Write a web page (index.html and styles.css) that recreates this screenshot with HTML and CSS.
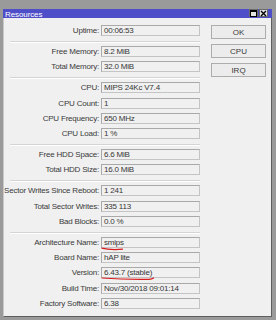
FILE: index.html
```html
<!DOCTYPE html>
<html lang="en">
<head>
    <meta charset="UTF-8">
    <meta name="viewport" content="width=device-width, initial-scale=1.0">
    <title>Resources</title>
    <link rel="stylesheet" href="styles.css">
</head>
<body>
    <div class="window">
        <div class="titlebar">
            <span class="title">Resources</span>
            <div class="title-buttons">
                <span class="title-btn">
                    <svg width="7" height="7" viewBox="0 0 7 7"><rect x="0.5" y="0.5" width="6" height="6" fill="none" stroke="#000"/><line x1="0" y1="1.5" x2="7" y2="1.5" stroke="#000"/></svg>
                </span>
                <span class="title-btn">
                    <svg width="7" height="7" viewBox="0 0 7 7"><path d="M1 1 L6 6 M6 1 L1 6" stroke="#000" stroke-width="1.4"/></svg>
                </span>
            </div>
        </div>

        <div class="content">
            <div class="info">
                <div class="group">
                    <div class="row"><span class="label">Uptime:</span><span class="field">00:06:53</span></div>
                </div>
                <div class="group">
                    <div class="row"><span class="label">Free Memory:</span><span class="field">8.2 MiB</span></div>
                    <div class="row"><span class="label">Total Memory:</span><span class="field">32.0 MiB</span></div>
                </div>
                <div class="group">
                    <div class="row"><span class="label">CPU:</span><span class="field">MIPS 24Kc V7.4</span></div>
                    <div class="row"><span class="label">CPU Count:</span><span class="field">1</span></div>
                    <div class="row"><span class="label">CPU Frequency:</span><span class="field">650 MHz</span></div>
                    <div class="row"><span class="label">CPU Load:</span><span class="field">1 %</span></div>
                </div>
                <div class="group">
                    <div class="row"><span class="label">Free HDD Space:</span><span class="field">6.6 MiB</span></div>
                    <div class="row"><span class="label">Total HDD Size:</span><span class="field">16.0 MiB</span></div>
                </div>
                <div class="group">
                    <div class="row"><span class="label">Sector Writes Since Reboot:</span><span class="field">1 241</span></div>
                    <div class="row"><span class="label">Total Sector Writes:</span><span class="field">335 113</span></div>
                    <div class="row"><span class="label">Bad Blocks:</span><span class="field">0.0 %</span></div>
                </div>
                <div class="group last">
                    <div class="row"><span class="label">Architecture Name:</span><span class="field">smips
                        <svg class="mark mark-arch" width="24" height="4" viewBox="0 0 24 4"><path d="M0.5 1.2 Q 9 3.2 22 2.2" fill="none" stroke="#d81e1e" stroke-width="1.2"/></svg>
                    </span></div>
                    <div class="row"><span class="label">Board Name:</span><span class="field">hAP lite</span></div>
                    <div class="row"><span class="label">Version:</span><span class="field">6.43.7 (stable)
                        <svg class="mark mark-version" width="56" height="5" viewBox="0 0 56 5"><path d="M0.5 2 Q 24 3.8 48 3.4 Q 51 3.2 53 1.8" fill="none" stroke="#d81e1e" stroke-width="1.2"/></svg>
                    </span></div>
                    <div class="row"><span class="label">Build Time:</span><span class="field">Nov/30/2018 09:01:14</span></div>
                    <div class="row"><span class="label">Factory Software:</span><span class="field">6.38</span></div>
                </div>
            </div>

            <div class="actions">
                <button class="btn">OK</button>
                <button class="btn">CPU</button>
                <button class="btn">IRQ</button>
            </div>
        </div>
    </div>
</body>
</html>
```

FILE: styles.css
```css
body {
    margin: 0;
    background: #9a9a9a;
    font-family: "Liberation Sans", Arial, sans-serif;
    font-size: 8px;
    color: #3a3a3a;
}
.window {
    margin: 9px 4px 0 3px;
    width: 269px;
    height: 308px;
    display: flex;
    flex-direction: column;
}
.titlebar {
    height: 9px;
    background: #4e4ec8;
    display: flex;
    align-items: center;
    justify-content: space-between;
    padding: 0 4px 0 2px;
}
.title {
    color: #ffffff;
    font-size: 8px;
    letter-spacing: -0.1px;
    line-height: 9px;
    padding-top: 1px;
}
.title-buttons {
    display: flex;
    gap: 1px;
    align-self: flex-start;
}
.title-btn {
    width: 9px;
    height: 8px;
    box-sizing: border-box;
    background: #e4e4e4;
    border: 1px solid #6a6a6a;
    display: flex;
    align-items: center;
    justify-content: center;
}
.title-btn svg {
    display: block;
}
.content {
    flex: 1;
    display: flex;
    background: #f0f0f0;
    border-right: 1px solid #5e5e5e;
    border-bottom: 1px solid #5e5e5e;
    border-left: 1px solid #c8c8c8;
    padding-top: 3px;
}
.info {
    padding-left: 6px;
}
.group {
    display: flex;
    flex-direction: column;
    gap: 4.25px;
    padding: 4px 0 5px;
    border-bottom: 1px solid #d4d4d4;
    box-shadow: 0 1px 0 #ffffff;
}
.group.last {
    border-bottom: none;
    box-shadow: none;
}
.row {
    display: flex;
    align-items: center;
    height: 11px;
}
.label {
    width: 89px;
    flex-shrink: 0;
    margin-right: 2px;
    display: flex;
    justify-content: flex-end;
    white-space: nowrap;
    letter-spacing: -0.2px;
}
.field {
    position: relative;
    width: 99px;
    height: 11px;
    box-sizing: border-box;
    border: 1px solid #a9a9a9;
    border-right-color: #c4c4c4;
    border-bottom-color: #c4c4c4;
    padding-left: 2px;
    line-height: 9px;
    white-space: nowrap;
    letter-spacing: -0.2px;
    color: #363636;
}
.mark {
    position: absolute;
    left: -1px;
    display: block;
}
.mark-arch {
    top: 9px;
}
.mark-version {
    top: 8px;
}
.actions {
    display: flex;
    flex-direction: column;
    gap: 5px;
    margin-left: 11px;
    padding-top: 4px;
}
.btn {
    width: 55px;
    height: 14px;
    padding: 0;
    background: #ececec;
    border: 1px solid #adadad;
    font-family: "Liberation Sans", Arial, sans-serif;
    font-size: 8px;
    color: #3a3a3a;
}
```
